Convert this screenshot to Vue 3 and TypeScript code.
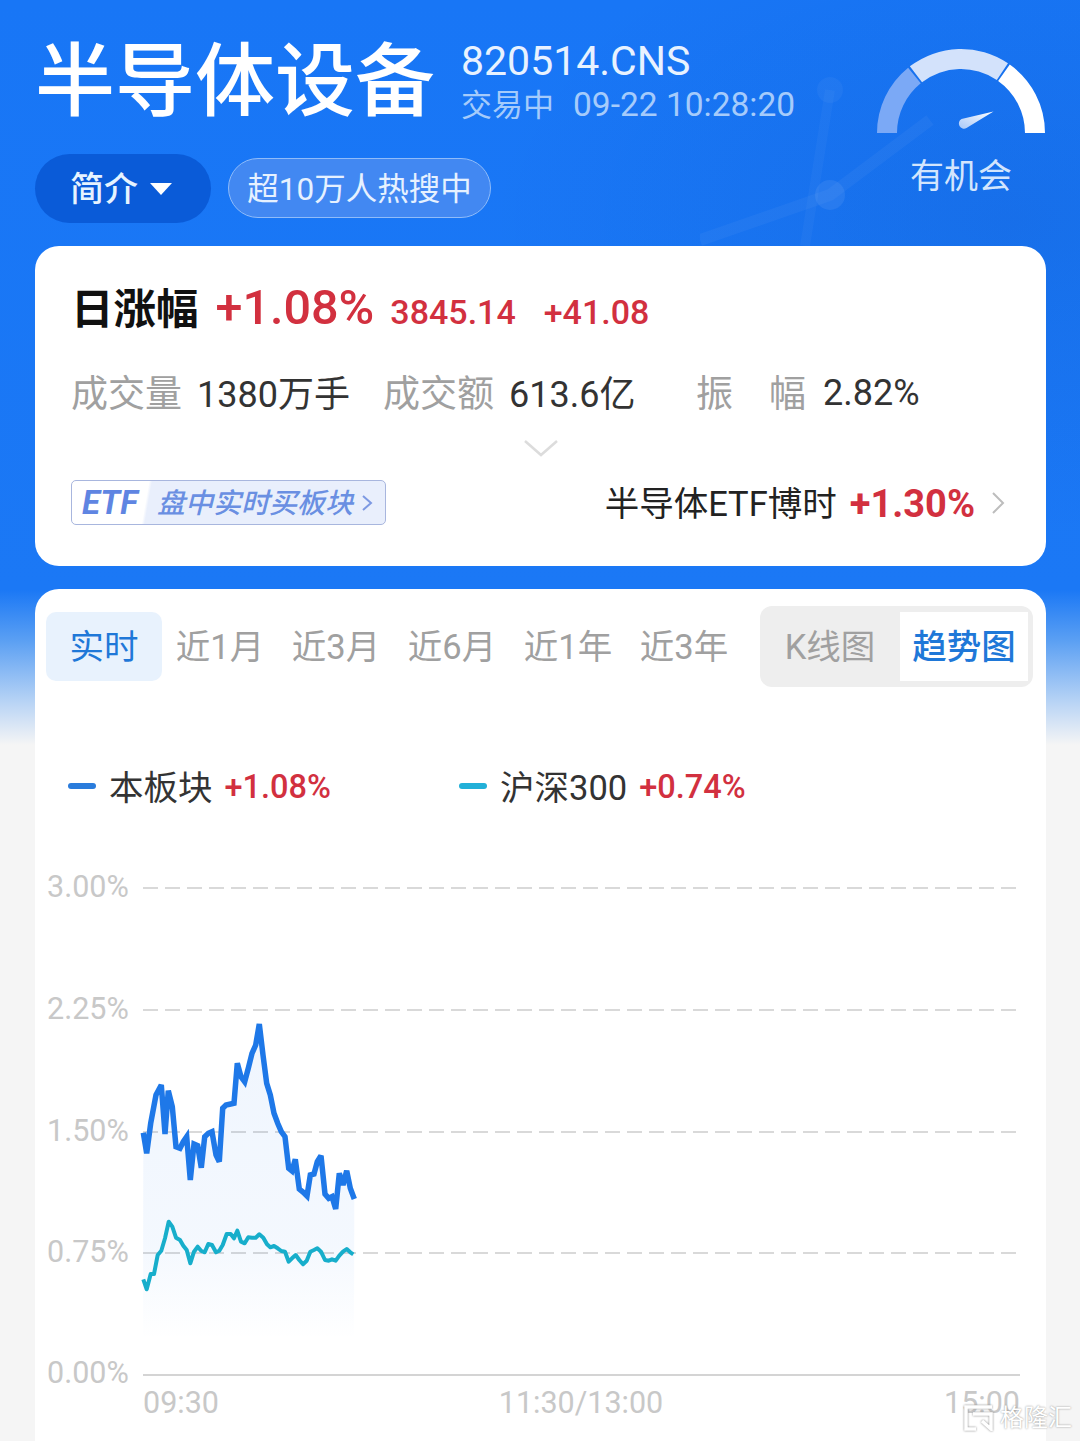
<script setup lang="ts">
type Pt = [number, number]

const tabs = ['实时', '近1月', '近3月', '近6月', '近1年', '近3年']

// chart sits at x=35, y=860 in the page
const OX = 35
const OY = 860

const blueRaw: Pt[] = [[70,398],[80,460],[92,370],[108,285],[124,255],[135,402],[145,272],[157,320],[168,440],[180,445],[190,425],[200,410],[211,540],[222,432],[233,437],[244,503],[254,410],[265,400],[276,395],[288,465],[298,485],[308,325],[318,315],[332,312],[342,310],[352,190],[363,230],[374,245],[385,205],[396,160],[407,135],[418,72],[429,165],[440,250],[451,285],[462,340],[473,370],[484,395],[495,410],[506,505],[516,513],[526,478],[538,567],[550,577],[561,588],[571,525],[582,522],[592,485],[603,467],[615,582],[626,595],[636,590],[647,627],[658,520],[669,555],[680,512],[691,565],[703,597]]
const tealRaw: Pt[] = [[70,838],[80,868],[92,822],[102,822],[113,765],[124,752],[135,715],[146,665],[157,680],[168,713],[180,720],[190,737],[200,750],[211,790],[222,755],[233,740],[244,753],[254,757],[265,732],[276,735],[288,757],[298,752],[308,735],[320,702],[332,702],[342,715],[352,692],[363,725],[374,730],[385,712],[396,713],[407,713],[418,703],[430,713],[441,733],[451,742],[462,738],[473,745],[484,753],[495,755],[506,785],[516,775],[527,765],[538,780],[549,793],[560,782],[571,755],[582,750],[592,745],[603,755],[615,780],[626,782],[636,778],[647,782],[658,767],[669,755],[680,747],[691,757],[700,763]]

const toChart = (p: Pt): string =>
  `${(120 + p[0] / 3 - OX).toFixed(1)},${(1000 + p[1] / 3 - OY).toFixed(1)}`

const bluePoints = blueRaw.map(toChart).join(' ')
const tealPoints = tealRaw.map(toChart).join(' ')
const areaPoints = `108,480 ${bluePoints} 319,480`

const grid = [
  { label: '3.00%', y: 28 },
  { label: '2.25%', y: 150 },
  { label: '1.50%', y: 272 },
  { label: '0.75%', y: 393 },
]

// gauge ring pieces, angles in degrees from the left end
function ring(a0: number, a1: number): string {
  const cx = 84
  const cy = 85
  const R = 84
  const r = 64
  const pt = (rad: number, deg: number) => {
    const t = (deg * Math.PI) / 180
    return `${(cx - rad * Math.cos(t)).toFixed(2)} ${(cy - rad * Math.sin(t)).toFixed(2)}`
  }
  return `M${pt(R, a0)}A${R} ${R} 0 0 1 ${pt(R, a1)}L${pt(r, a1)}A${r} ${r} 0 0 0 ${pt(r, a0)}Z`
}
</script>

<template>
  <div class="page">
    <svg class="deco" width="380" height="246" viewBox="0 0 380 246" fill="none">
      <path d="M0 240 L130 195 L230 120" stroke="#fff" stroke-opacity=".04" stroke-width="12" />
      <path d="M105 246 L130 90" stroke="#fff" stroke-opacity=".03" stroke-width="10" />
      <circle cx="130" cy="90" r="13" fill="#fff" fill-opacity=".04" />
      <circle cx="130" cy="195" r="15" fill="#fff" fill-opacity=".07" />
    </svg>

    <header class="hero">
      <div class="hero-left">
        <div class="title-row">
          <h1 class="title">半导体设备</h1>
          <div class="meta">
            <div class="code">820514.CNS</div>
            <div class="status"><span>交易中</span><span class="time">09-22 10:28:20</span></div>
          </div>
        </div>
        <div class="pills">
          <div class="pill-intro">简介<i class="caret" /></div>
          <div class="pill-hot">超10万人热搜中</div>
        </div>
      </div>
      <div class="gauge">
        <svg width="168" height="85" viewBox="0 0 168 85">
          <defs>
            <linearGradient id="needle" x1="1" y1="0" x2="0" y2="1">
              <stop offset="0" stop-color="#fff" />
              <stop offset="1" stop-color="#a9c8f8" />
            </linearGradient>
          </defs>
          <path :d="ring(0, 51)" fill="#7ba9f6" />
          <path :d="ring(52.5, 124)" fill="#d3e2fb" />
          <path :d="ring(125.5, 180)" fill="#fff" />
          <path d="M116.500 63.500 L84.500 71 A4.800 4.800 0 0 0 89.500 80 Z" fill="url(#needle)" />
        </svg>
        <div class="gauge-label">有机会</div>
      </div>
    </header>

    <section class="card quote">
      <div class="quote-top">
        <span class="day-label">日涨幅</span>
        <span class="day-pct">+1.08%</span>
        <span class="day-num">3845.14</span>
        <span class="day-num chg">+41.08</span>
      </div>
      <div class="stats">
        <span class="k">成交量</span><span class="v w-vol">1380万手</span>
        <span class="k">成交额</span><span class="v w-amt">613.6亿</span>
        <span class="k spread"><span>振</span><span>幅</span></span><span class="v last">2.82%</span>
      </div>
      <svg class="expand" width="36" height="20" viewBox="0 0 36 20" fill="none">
        <path d="M2 3 L18 17 L34 3" stroke="#dcdcdc" stroke-width="2.500" />
      </svg>
      <div class="etf-row">
        <div class="etf-badge">
          <span class="etf-word">ETF</span>
          <span class="etf-text">盘中实时买板块</span>
          <svg width="12" height="20" viewBox="0 0 12 20" fill="none">
            <path d="M2 3 L10 10 L2 17" stroke="#7d99e2" stroke-width="2" />
          </svg>
        </div>
        <div class="etf-right">
          <span class="etf-name">半导体ETF博时</span>
          <span class="etf-pct">+1.30%</span>
          <svg width="14" height="24" viewBox="0 0 14 24" fill="none">
            <path d="M2 2 L12 12 L2 22" stroke="#bdbdbd" stroke-width="2" />
          </svg>
        </div>
      </div>
    </section>

    <section class="card trend">
      <div class="tabs">
        <div v-for="(t, i) in tabs" :key="t" class="tab" :class="{ active: i === 0 }">{{ t }}</div>
        <div class="seg">
          <div class="seg-item">K线图</div>
          <div class="seg-item on">趋势图</div>
        </div>
      </div>

      <div class="legend">
        <div class="legend-item">
          <i class="dash" />
          <span class="name">本板块</span>
          <span class="val">+1.08%</span>
        </div>
        <div class="legend-item">
          <i class="dash teal" />
          <span class="name">沪深300</span>
          <span class="val">+0.74%</span>
        </div>
      </div>

      <svg class="chart" width="1011" height="581" viewBox="0 0 1011 581">
        <defs>
          <linearGradient id="area" x1="0" y1="0" x2="0" y2="1">
            <stop offset="0" stop-color="#1f78ee" stop-opacity=".07" />
            <stop offset=".7" stop-color="#1f78ee" stop-opacity=".05" />
            <stop offset="1" stop-color="#1f78ee" stop-opacity="0" />
          </linearGradient>
        </defs>
        <g v-for="g in grid" :key="g.label">
          <text x="12" :y="g.y + 9" class="axis">{{ g.label }}</text>
          <line x1="108" x2="985" :y1="g.y" :y2="g.y" stroke="#d9d9d9" stroke-width="2" stroke-dasharray="15 7" />
        </g>
        <text x="12" y="523" class="axis">0.00%</text>
        <line x1="108" x2="985" y1="515" y2="515" stroke="#d4d4d4" stroke-width="2" />
        <text x="108" y="553" class="axis">09:30</text>
        <text x="546" y="553" class="axis" text-anchor="middle">11:30/13:00</text>
        <text x="985" y="553" class="axis" text-anchor="end">15:00</text>
        <polygon :points="areaPoints" fill="url(#area)" />
        <polyline :points="bluePoints" fill="none" stroke="#1e78e8" stroke-width="5.500" stroke-linejoin="miter" stroke-miterlimit="3" />
        <polyline :points="tealPoints" fill="none" stroke="#17aecb" stroke-width="4" stroke-linejoin="round" />
      </svg>
    </section>

    <div class="watermark">
      <svg width="30" height="26" viewBox="0 0 30 26" fill="none">
        <path d="M28 2 H2 V24 H12 M9 9 H27 V24 L18 16" stroke="#fff" stroke-width="3.500" />
      </svg>
      <span>格隆汇</span>
    </div>
  </div>
</template>

<style>
html,
body {
  margin: 0;
  background: #f5f5f5;
}
</style>

<style scoped>
.page {
  position: relative;
  width: 1080px;
  height: 1441px;
  overflow: hidden;
  box-sizing: border-box;
  padding: 0 34px 0 35px;
  font-family: Roboto, "Noto Sans CJK SC", sans-serif;
  background:
    radial-gradient(ellipse 520px 320px at 1010px 220px, rgba(0, 30, 110, 0.09), rgba(0, 30, 110, 0)),
    linear-gradient(180deg, #1876f6 0, #1b78f5 590px, #5a9ff3 640px, #b5d2f5 700px, #f5f5f5 745px);
}

.deco {
  position: absolute;
  top: 0;
  left: 700px;
}

.hero {
  position: relative;
  height: 246px;
  display: flex;
  justify-content: space-between;
}

.title-row {
  display: flex;
  padding-top: 37px;
  height: 118px;
  box-sizing: border-box;
}

.title {
  margin: 0;
  font-size: 80px;
  line-height: 90px;
  font-weight: 500;
  color: #fff;
  white-space: nowrap;
}

.meta {
  margin-left: 26px;
  margin-top: 2px;
}

.code {
  font-size: 41px;
  line-height: 44px;
  color: #e8f2ff;
}

.status {
  display: flex;
  align-items: baseline;
  gap: 19px;
  font-size: 31px;
  line-height: 44px;
  color: #a5cbfb;
  white-space: nowrap;
}

.time {
  font-size: 33.5px;
}

.pills {
  display: flex;
  align-items: center;
  gap: 17px;
  margin-top: 36px;
}

.pill-intro {
  width: 176px;
  height: 69px;
  box-sizing: border-box;
  padding: 0 4px 5px 0;
  border-radius: 35px;
  background: #0a5bd8;
  color: #e6f3ff;
  font-size: 34px;
  font-weight: 500;
  display: flex;
  align-items: center;
  justify-content: center;
  gap: 12px;
}

.caret {
  width: 0;
  height: 0;
  margin-top: 5px;
  border-left: 11px solid transparent;
  border-right: 11px solid transparent;
  border-top: 12px solid #fff;
}

.pill-hot {
  width: 263px;
  height: 60px;
  box-sizing: border-box;
  padding-bottom: 4px;
  margin-top: -1px;
  border-radius: 30px;
  border: 1px solid #8fbcfa;
  background: #4288f2;
  color: #e6f1ff;
  font-size: 31.5px;
  display: flex;
  align-items: center;
  justify-content: center;
  white-space: nowrap;
}

.gauge {
  display: flex;
  flex-direction: column;
  align-items: center;
  padding-top: 48px;
  margin-right: 1px;
}

.gauge svg {
  display: block;
}

.gauge-label {
  margin-top: 22px;
  font-size: 34px;
  line-height: 42px;
  color: #d3e5fd;
}

.card {
  background: #fff;
  border-radius: 24px;
}

.quote {
  position: relative;
  height: 320px;
  box-sizing: border-box;
  padding: 34px 36px 0 36px;
}

.quote-top {
  display: flex;
  align-items: baseline;
  height: 56px;
  line-height: 56px;
  white-space: nowrap;
}

.day-label {
  font-size: 42.5px;
  font-weight: 700;
  color: #111;
}

.day-pct {
  margin-left: 17px;
  font-size: 48.5px;
  font-weight: 500;
  color: #d2303f;
}

.day-num {
  margin-left: 16px;
  font-size: 34px;
  font-weight: 500;
  color: #d2303f;
}

.chg {
  margin-left: 28px;
}

.stats {
  display: flex;
  align-items: center;
  margin-top: 32px;
  height: 46px;
  font-size: 37px;
  white-space: nowrap;
}

.k {
  color: #a0a0a0;
}

.v {
  margin-left: 15px;
  font-size: 36px;
  color: #333;
}

.v.last {
  margin-left: 17px;
  padding-top: 3px;
}

.w-vol {
  width: 186px;
}

.w-amt {
  width: 187px;
}

.spread {
  display: flex;
  width: 110px;
  justify-content: space-between;
}

.expand {
  display: block;
  margin: 24px auto 0;
}

.etf-row {
  display: flex;
  align-items: center;
  justify-content: space-between;
  margin-top: 18px;
  padding-right: 5px;
}

.etf-badge {
  display: flex;
  align-items: center;
  width: 315px;
  height: 45px;
  box-sizing: border-box;
  border: 1px solid #a8b6de;
  border-radius: 5px;
  background: linear-gradient(100deg, #fff 76px, #e9effc 79px);
  padding-left: 10px;
}

.etf-word {
  font-size: 33px;
  font-weight: 700;
  font-style: italic;
  color: #5f85e2;
  width: 75px;
}

.etf-text {
  font-size: 28px;
  font-style: italic;
  font-weight: 500;
  color: #6a8fe2;
  white-space: nowrap;
  margin-right: 8px;
  padding-bottom: 3px;
}

.etf-right {
  display: flex;
  align-items: center;
}

.etf-name {
  padding-bottom: 3px;
  font-size: 34.5px;
  color: #222;
  white-space: nowrap;
}

.etf-pct {
  margin: 3px 16px 0 13px;
  font-size: 38px;
  font-weight: 700;
  color: #d2303f;
}

.trend {
  margin-top: 23px;
  height: 900px;
  padding-top: 17px;
  box-sizing: border-box;
}

.tabs {
  display: flex;
  align-items: center;
  height: 81px;
  padding: 0 13px 0 11px;
}

.tab {
  width: 116px;
  height: 69px;
  line-height: 70px;
  text-align: center;
  font-size: 34.5px;
  color: #a0a0a0;
  border-radius: 10px;
  white-space: nowrap;
}

.tab.active {
  color: #1f78d8;
  background: #e8f2fd;
}

.seg {
  margin-left: auto;
  display: flex;
  justify-content: flex-end;
  width: 273px;
  height: 81px;
  box-sizing: border-box;
  padding: 6px 5px 6px 0;
  border-radius: 12px;
  background: #eee;
}

.seg-item {
  flex: none;
  width: 140px;
  line-height: 70px;
  text-align: center;
  font-size: 34.5px;
  color: #a0a0a0;
  white-space: nowrap;
}

.seg-item.on {
  width: 128px;
  background: #fff;
  color: #1f78d8;
  font-weight: 500;
}

.legend {
  display: flex;
  height: 40px;
  margin-top: 79px;
  padding-left: 33px;
}

.legend-item {
  width: 391px;
  display: flex;
  align-items: center;
  white-space: nowrap;
}

.dash {
  width: 28px;
  height: 6px;
  border-radius: 3px;
  margin-right: 13px;
  background: #2a7cdc;
}

.dash.teal {
  background: #22b0d8;
}

.name {
  padding-bottom: 3px;
  font-size: 34.5px;
  color: #333;
}

.val {
  margin-left: 12px;
  padding-top: 1px;
  font-size: 32.5px;
  font-weight: 500;
  color: #d2303f;
}

.chart {
  display: block;
  margin-top: 54px;
}

.axis {
  font-size: 30.5px;
  fill: #c8c8c8;
}

.watermark {
  position: absolute;
  right: 8px;
  bottom: 9px;
  display: flex;
  align-items: center;
  gap: 6px;
  color: #fff;
  font-size: 24px;
  line-height: 28px;
  text-shadow: 0 0 2px #888;
}

.watermark svg {
  filter: drop-shadow(0 0 1px #888);
}
</style>
